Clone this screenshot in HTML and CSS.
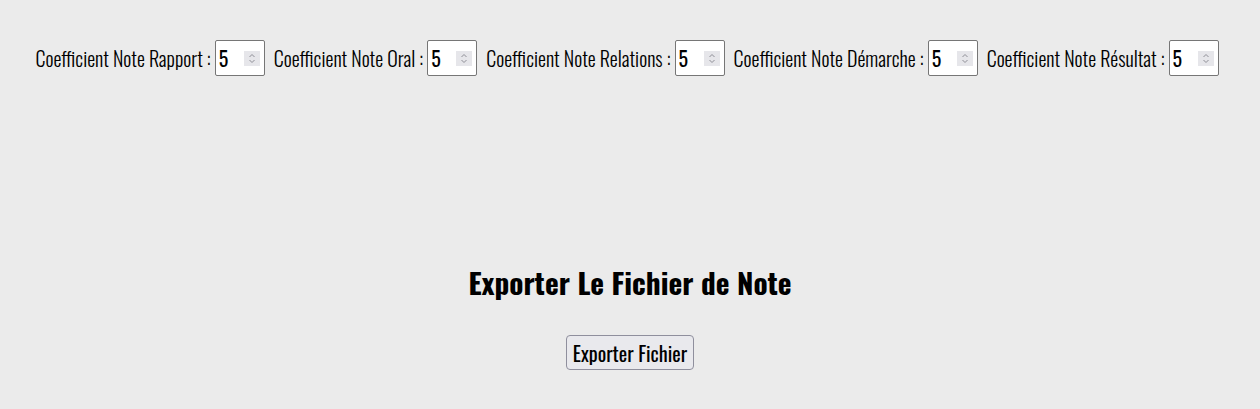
FILE: index.html
```html
<!DOCTYPE html>
<html lang="fr">
<head>
<meta charset="utf-8">
<title>Export</title>
<link rel="stylesheet" href="styles.css">
</head>
<body>
<div class="coefs">
  <label class="coef">Coefficient Note Rapport :
    <span class="field"><input class="num" type="number" value="5"><svg class="spin" viewBox="0 0 16 15" width="16" height="15"><path d="M5.5 6 L8 3.5 L10.5 6 M5.5 9 L8 11.5 L10.5 9" fill="none" stroke="#8e8e96" stroke-width="1"/></svg></span>
  </label>
  <label class="coef">Coefficient Note Oral :
    <span class="field"><input class="num" type="number" value="5"><svg class="spin" viewBox="0 0 16 15" width="16" height="15"><path d="M5.5 6 L8 3.5 L10.5 6 M5.5 9 L8 11.5 L10.5 9" fill="none" stroke="#8e8e96" stroke-width="1"/></svg></span>
  </label>
  <label class="coef">Coefficient Note Relations :
    <span class="field"><input class="num" type="number" value="5"><svg class="spin" viewBox="0 0 16 15" width="16" height="15"><path d="M5.5 6 L8 3.5 L10.5 6 M5.5 9 L8 11.5 L10.5 9" fill="none" stroke="#8e8e96" stroke-width="1"/></svg></span>
  </label>
  <label class="coef">Coefficient Note Démarche :
    <span class="field"><input class="num" type="number" value="5"><svg class="spin" viewBox="0 0 16 15" width="16" height="15"><path d="M5.5 6 L8 3.5 L10.5 6 M5.5 9 L8 11.5 L10.5 9" fill="none" stroke="#8e8e96" stroke-width="1"/></svg></span>
  </label>
  <label class="coef">Coefficient Note Résultat :
    <span class="field"><input class="num" type="number" value="5"><svg class="spin" viewBox="0 0 16 15" width="16" height="15"><path d="M5.5 6 L8 3.5 L10.5 6 M5.5 9 L8 11.5 L10.5 9" fill="none" stroke="#8e8e96" stroke-width="1"/></svg></span>
  </label>
</div>
<div class="export">
  <h2 class="title">Exporter Le Fichier de Note</h2>
  <button class="btn" type="button">Exporter Fichier</button>
</div>
</body>
</html>
```
FILE: styles.css
```css
html, body {
  margin: 0;
  padding: 0;
  background: #ebebeb;
}
body {
  font-family: "Oswald", "Roboto Condensed", sans-serif;
  color: #000;
}
.coefs {
  display: flex;
  justify-content: center;
  align-items: center;
  gap: 9px;
  padding: 40px 6px 0 0;
}
.coef {
  font-size: 20px;
  font-weight: 300;
  white-space: nowrap;
  display: flex;
  align-items: center;
  gap: 4px;
}
.field {
  display: flex;
  align-items: center;
  width: 50px;
  height: 36px;
  box-sizing: border-box;
  border: 1px solid #767676;
  border-radius: 2px;
  background: #fff;
  padding: 0 4px 0 3px;
}
.num {
  flex: 1;
  min-width: 0;
  width: 20px;
  border: 0;
  outline: none;
  padding: 0;
  margin: 0;
  background: transparent;
  font-family: "Oswald", sans-serif;
  font-size: 20px;
  font-weight: 400;
  color: #000;
  -moz-appearance: textfield;
  appearance: textfield;
}
.num::-webkit-inner-spin-button,
.num::-webkit-outer-spin-button {
  -webkit-appearance: none;
  margin: 0;
}
.spin {
  flex: none;
  display: block;
  background: #e6e6ea;
}
.export {
  display: flex;
  flex-direction: column;
  align-items: center;
  padding-top: 184px;
}
.title {
  font-size: 29.3px;
  font-weight: 700;
  margin: 0;
}
.btn {
  margin-top: 32px;
  font-family: inherit;
  font-size: 20px;
  font-weight: 400;
  height: 35px;
  padding: 0 6px;
  background: #e9e9ed;
  border: 1px solid #8f8f9d;
  border-radius: 4px;
  color: #000;
}
```
